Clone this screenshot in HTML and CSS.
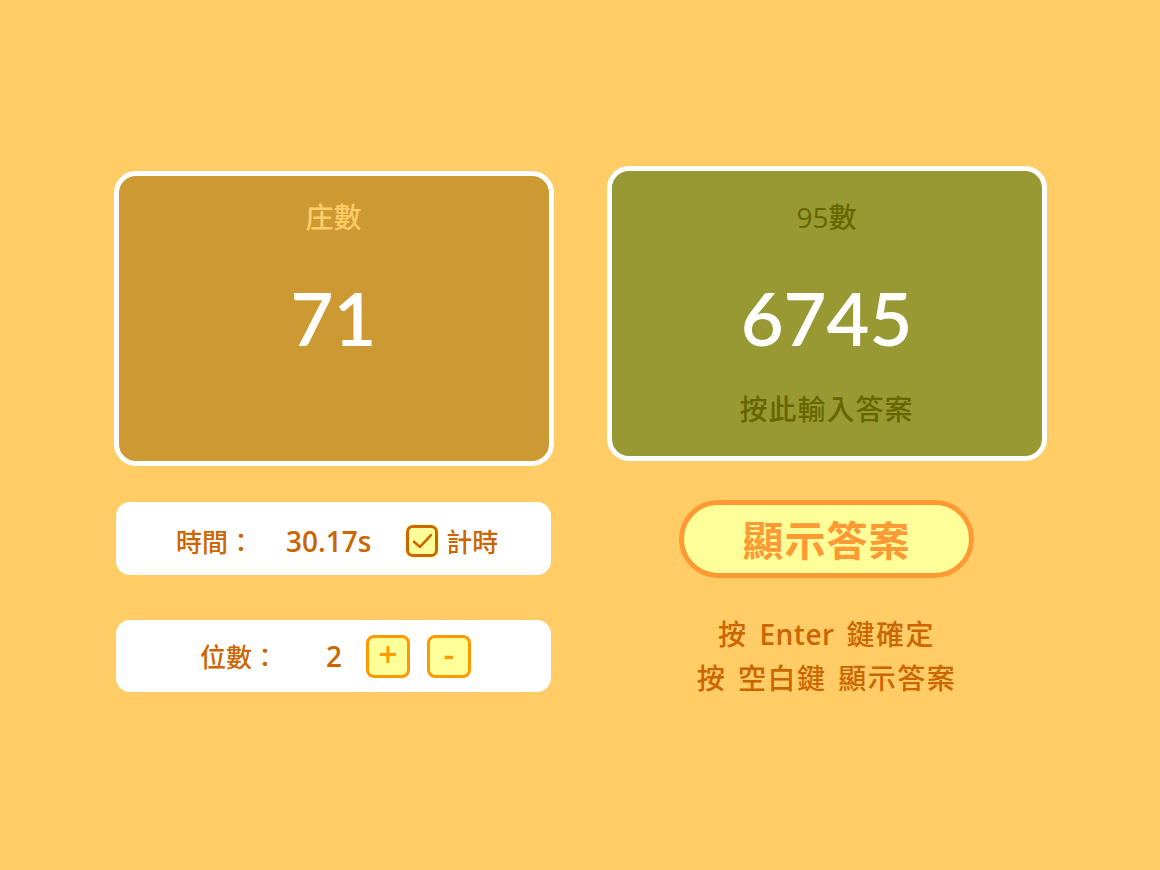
FILE: index.html
```html
<!DOCTYPE html>
<html lang="zh-Hant">
<head>
<meta charset="utf-8">
<title>數字練習</title>
<link rel="stylesheet" href="styles.css">
</head>
<body>
<main class="app">
  <section class="col col-left">
    <div class="card card-base">
      <div class="card-title">庄數</div>
      <div class="card-number">71</div>
    </div>
    <div class="panel panel-time">
      <span class="label">時間：</span>
      <span class="value time-value">30.17s</span>
      <label class="check">
        <span class="check-box">
          <svg viewBox="0 0 24 24" width="22" height="22"><path d="M3.3 12.8l6.5 5.7 12-13" fill="none" stroke="#cc6600" stroke-width="2.8" stroke-linecap="round" stroke-linejoin="round"/></svg>
        </span>
        <span class="check-text">計時</span>
      </label>
    </div>
    <div class="panel panel-digits">
      <span class="label">位數：</span>
      <span class="value digit-value">2</span>
      <button class="step step-plus">+</button>
      <button class="step step-minus">-</button>
    </div>
  </section>
  <section class="col col-right">
    <div class="card card-target">
      <div class="card-title">95數</div>
      <div class="card-number">6745</div>
      <div class="card-hint">按此輸入答案</div>
    </div>
    <button class="show-btn">顯示答案</button>
    <div class="hints">
      <p>按 <span class="key">Enter</span> 鍵確定</p>
      <p>按 空白鍵 顯示答案</p>
    </div>
  </section>
</main>
</body>
</html>
```
FILE: styles.css
```css
html, body {
  margin: 0;
  padding: 0;
}
body {
  background: #ffcc66;
  width: 1160px;
  height: 870px;
  font-family: "Open Sans", "Noto Sans CJK TC", sans-serif;
  overflow: hidden;
}
.app {
  display: flex;
  justify-content: center;
  gap: 53px;
  padding-top: 166px;
}
.col {
  display: flex;
  flex-direction: column;
  align-items: center;
  width: 440px;
}
.card {
  box-sizing: border-box;
  width: 440px;
  height: 295px;
  border: 5px solid #ffffff;
  border-radius: 22px;
  display: flex;
  flex-direction: column;
  align-items: center;
}
.card-base {
  background: #cc9933;
  margin-top: 5px;
}
.card-target {
  background: #999933;
}
.card-title {
  font-size: 28px;
  line-height: 40px;
  font-weight: 500;
}
.card-base .card-title {
  color: #ffcc66;
  margin-top: 21px;
}
.card-target .card-title {
  color: #666600;
  margin-top: 26px;
}
.card-number {
  margin-top: 36px;
  font-family: "Lato", "Open Sans", sans-serif;
  font-size: 74px;
  line-height: 90px;
  font-weight: 600;
  color: #ffffff;
}
.card-hint {
  margin-top: 26px;
  font-size: 28px;
  line-height: 40px;
  color: #666600;
  font-weight: 500;
  letter-spacing: 1px;
}
.panel {
  box-sizing: border-box;
  width: 435px;
  background: #ffffff;
  border-radius: 14px;
  display: flex;
  align-items: center;
  color: #cc6600;
  font-size: 26px;
  font-weight: 500;
}
.panel-time {
  height: 73px;
  margin-top: 36px;
  padding: 4px 0 0 60px;
}
.panel-digits {
  height: 72px;
  margin-top: 45px;
  padding: 0 0 0 84px;
}
.value {
  font-size: 28px;
  font-weight: 600;
}
.time-value {
  margin-left: 32px;
}
.check {
  display: flex;
  align-items: center;
  margin-left: 35px;
}
.check-box {
  box-sizing: border-box;
  width: 32px;
  height: 32px;
  border: 3px solid #cc6600;
  border-radius: 7px;
  background: #ffff99;
  box-shadow: 0 0 3px #ffff66;
  display: flex;
  align-items: center;
  justify-content: center;
}
.check-text {
  margin-left: 8px;
}
.digit-value {
  margin-left: 48px;
}
.step {
  box-sizing: border-box;
  width: 44px;
  height: 43px;
  border: 3px solid #ff9900;
  border-radius: 8px;
  background: #ffff99;
  color: #ff9900;
  font-family: "Open Sans", sans-serif;
  font-size: 34px;
  font-weight: 600;
  line-height: 1;
  padding: 0 0 4px;
  display: flex;
  align-items: center;
  justify-content: center;
}
.step-plus {
  margin-left: 24px;
}
.step-minus {
  margin-left: 17px;
}
.show-btn {
  box-sizing: border-box;
  width: 295px;
  height: 78px;
  margin-top: 39px;
  border: 5px solid #ff9933;
  border-radius: 40px;
  background: #ffff99;
  color: #ff9933;
  font-family: "Noto Sans CJK TC", sans-serif;
  font-size: 41px;
  font-weight: 700;
  letter-spacing: 1px;
  padding: 0 0 3px;
}
.hints {
  margin-top: 34px;
  text-align: center;
  color: #cc6600;
  font-size: 28px;
  font-weight: 500;
  line-height: 44px;
  letter-spacing: 1.5px;
  word-spacing: 3px;
}
.hints p {
  margin: 0;
}
.key {
  font-weight: 600;
  letter-spacing: 0.5px;
}
```
